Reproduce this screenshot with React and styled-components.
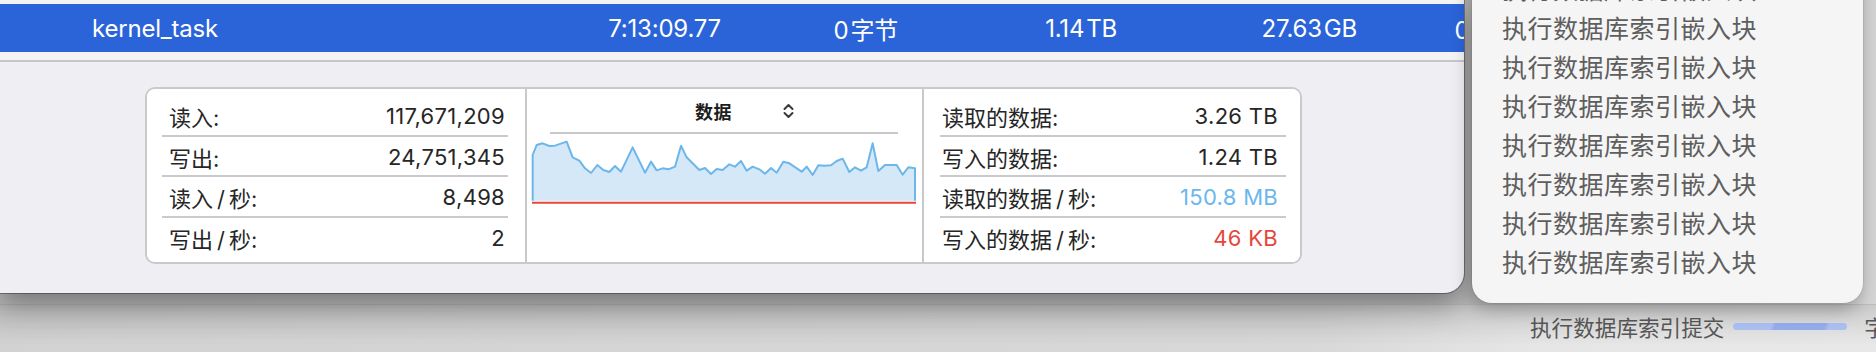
import React from "react";
import styled, { createGlobalStyle } from "styled-components";

const Global = createGlobalStyle`
  html, body { margin: 0; padding: 0; }
  body {
    width: 1876px;
    height: 352px;
    overflow: hidden;
    background: #d8d8d8;
    font-family: Inter, "Noto Sans CJK SC", sans-serif;
    -webkit-font-smoothing: antialiased;
  }
`;

const Desktop = styled.div`
  position: relative;
  width: 1876px;
  height: 352px;
  display: flex;
  flex-direction: column;
  background: linear-gradient(to right, #b8b8b8 0%, #bababa 75%, #d6d6d6 100%);
  overflow: hidden;
`;

const Window = styled.div`
  position: relative;
  z-index: 1;
  width: 1464px;
  height: 293px;
  flex: none;
  display: flex;
  flex-direction: column;
  background: #efeef3;
  border-bottom-right-radius: 20px;
  overflow: hidden;
  box-shadow: 0 0 0 1px rgba(0, 0, 0, 0.32), 0 10px 28px rgba(0, 0, 0, 0.38);
`;

const TableStrip = styled.div`
  height: ${(p) => p.$h}px;
  flex: none;
  background: #f4f4f5;
`;

const SelectedRow = styled.div`
  height: 48px;
  flex: none;
  background: #2b64d9;
  color: #ffffff;
  font-size: 24px;
  display: grid;
  grid-template-columns: 400px 229px 177px 219px 240px 162px;
  padding-left: 92px;
  align-items: center;
  white-space: nowrap;
`;

const Cell = styled.span`
  text-align: ${(p) => (p.$left ? "left" : "right")};
  letter-spacing: -0.2px;
`;

const SplitDivider = styled.div`
  height: 2px;
  flex: none;
  background: #c6c6c8;
`;

const DetailPanel = styled.div`
  flex: 1;
  padding: 25px 0 0 145px;
`;

const StatsBox = styled.div`
  width: 1157px;
  height: 177px;
  box-sizing: border-box;
  border: 2px solid #c9c9cb;
  border-radius: 10px;
  background: #ffffff;
  display: grid;
  grid-template-columns: 378px 395px 376px;
  column-gap: 2px;
  background-clip: padding-box;
  overflow: hidden;
`;

const StatsCell = styled.div`
  background: #ffffff;
  padding-top: 7px;
  box-shadow: ${(p) => (p.$divider ? "2px 0 0 #c9c9cb" : "none")};
  display: flex;
  flex-direction: column;
`;

const StatRow = styled.div`
  height: 38.5px;
  margin: ${(p) => p.$margin};
  padding: ${(p) => p.$padding};
  display: flex;
  align-items: center;
  justify-content: space-between;
  font-size: 22px;
  color: #262626;
  border-bottom: ${(p) => (p.$last ? "none" : "2px solid #cacacc")};
  white-space: nowrap;
`;

const StatLabel = styled.span`
  padding-top: 2px;
`;

const StatValue = styled.span`
  color: ${(p) => p.$color || "#262626"};
  letter-spacing: 0.3px;
  padding-top: 2px;
`;

const ChartCell = styled.div`
  background: #ffffff;
  display: flex;
  flex-direction: column;
  box-shadow: 2px 0 0 #c9c9cb;
`;

const ChartHeader = styled.div`
  height: 43px;
  display: flex;
  align-items: center;
  padding-left: 168px;
  gap: 51px;
`;

const ChartTitle = styled.span`
  font-size: 18px;
  font-weight: 700;
  color: #1e1e1e;
  letter-spacing: 0.5px;
`;

const ChartRule = styled.div`
  height: 2px;
  margin: 0 24px 0 23px;
  background: #c9c9cb;
`;

const ChartSvg = styled.svg`
  display: block;
  margin: 4px 0 0 4px;
`;

const Menu = styled.div`
  position: absolute;
  z-index: 2;
  top: -29px;
  right: 13px;
  width: 391px;
  padding: 0 0 20px 30px;
  box-sizing: border-box;
  background: #f5f5f5;
  border-radius: 0 0 20px 20px;
  box-shadow: 0 0 0 1px rgba(0, 0, 0, 0.06), -2px 6px 18px rgba(0, 0, 0, 0.3);
  display: flex;
  flex-direction: column;
`;

const MenuItem = styled.div`
  height: 39px;
  line-height: 39px;
  font-size: 25px;
  letter-spacing: 0.5px;
  color: #5e5e5e;
  white-space: nowrap;
`;

const BackBar = styled.div`
  margin-top: 11px;
  flex: 1;
  background:
    linear-gradient(rgba(0, 0, 0, 0.12), rgba(0, 0, 0, 0) 85%),
    linear-gradient(to right, #d2d2d2 0%, #d8d8d8 70%, #e6e6e6 82%, #e8e8e8 100%);
  border-top: 1px solid rgba(0, 0, 0, 0.18);
  display: flex;
  align-items: center;
  padding: 0 0 4px 1530px;
  gap: 9px;
  white-space: nowrap;
  font-size: 21.6px;
  color: #565656;
`;

const Progress = styled.div`
  width: 114px;
  height: 7px;
  flex: none;
  border-radius: 4px;
  margin-right: 8px;
  background: linear-gradient(
    110deg,
    #aabef0 0 34%,
    #93acea 37% 80%,
    #aabef0 83% 100%
  );
`;

const left = [
  ["读入:", "117,671,209"],
  ["写出:", "24,751,345"],
  ["读入\u2009/\u2009秒:", "8,498"],
  ["写出\u2009/\u2009秒:", "2"],
];

const right = [
  ["读取的数据:", "3.26 TB"],
  ["写入的数据:", "1.24 TB"],
  ["读取的数据\u2009/\u2009秒:", "150.8 MB", "#6bb7ec"],
  ["写入的数据\u2009/\u2009秒:", "46 KB", "#e6463c"],
];

const pts = [
  [1.67, 17], [5.67, 7], [11.67, 5.33], [18.33, 8], [24, 7.67], [35.67, 3.67],
  [41.67, 19.33], [48.33, 22.67], [54, 30.33], [60, 35], [66.33, 27], [72.33, 32],
  [78.33, 34], [84, 28], [90, 33.67], [101.67, 9.33], [114, 34.67], [120, 23.67],
  [125.67, 32.33], [131.67, 30.33], [137.33, 31.33], [144, 28.67], [150, 7.67],
  [155.67, 19.33], [168.33, 32], [174, 30], [180, 36], [185.67, 31], [191.67, 32],
  [198.33, 26.33], [204, 28.67], [210, 23], [215.67, 32.67], [221.67, 28.67],
  [228.33, 31.33], [234, 35.67], [240, 30], [245.67, 34.67], [252.33, 23.67],
  [258.33, 25.33], [270.67, 33.67], [275.67, 28.67], [281.67, 37], [287.33, 27.33],
  [293.33, 27.67], [300, 27.33], [305.67, 23], [311.67, 20.67], [318.33, 34],
  [324, 29.33], [330, 32.67], [335.67, 29.33], [341.67, 5.33], [347.33, 33],
  [354, 27], [365.67, 27], [371.67, 36.67], [377.33, 29.33], [384, 30.33],
];

const line = pts.map((p) => p.join(",")).join(" ");
const area = `1.67,62.67 ${line} 384,62.67`;

function Chevrons() {
  return (
    <svg width="11" height="16" viewBox="0 0 11 16">
      <path
        d="M1.5 6 L5.5 2 L9.5 6 M1.5 10 L5.5 14 L9.5 10"
        fill="none"
        stroke="#3a3a3a"
        strokeWidth="2"
        strokeLinecap="round"
        strokeLinejoin="round"
      />
    </svg>
  );
}

function StatColumn({ rows, margin, padding, divider }) {
  return (
    <StatsCell $divider={divider}>
      {rows.map(([l, v, c], i) => (
        <StatRow key={l} $margin={margin} $padding={padding} $last={i === rows.length - 1}>
          <StatLabel>{l}</StatLabel>
          <StatValue $color={c}>{v}</StatValue>
        </StatRow>
      ))}
    </StatsCell>
  );
}

export default function App() {
  return (
    <>
      <Global />
      <Desktop>
        <Window>
          <TableStrip $h={4} />
          <SelectedRow>
            <Cell $left>kernel_task</Cell>
            <Cell>7:13:09.77</Cell>
            <Cell>0{"\u200A"}字节</Cell>
            <Cell>1.14{"\u200A"}TB</Cell>
            <Cell>27.63{"\u200A"}GB</Cell>
            <Cell>0{"\u200A"}字节</Cell>
          </SelectedRow>
          <TableStrip $h={8} />
          <SplitDivider />
          <DetailPanel>
            <StatsBox>
              <StatColumn rows={left} margin="0 17px 0 15px" padding="0 3px 0 7px" divider />
              <ChartCell>
                <ChartHeader>
                  <ChartTitle>数据</ChartTitle>
                  <Chevrons />
                </ChartHeader>
                <ChartRule />
                <ChartSvg width="386" height="68" viewBox="0 0 386 68">
                  <polygon points={area} fill="#d5e8f8" />
                  <polyline
                    points={`1.67,62.67 ${line} 384,62.67`}
                    fill="none"
                    stroke="#6db6ea"
                    strokeWidth="2"
                    strokeLinejoin="round"
                  />
                  <line x1="1" y1="64.7" x2="385" y2="64.7" stroke="#e6463c" strokeWidth="2" />
                </ChartSvg>
              </ChartCell>
              <StatColumn rows={right} margin="0 14px 0 16px" padding="0 8px 0 2px" />
            </StatsBox>
          </DetailPanel>
        </Window>
        <BackBar>
          <span>执行数据库索引提交</span>
          <Progress />
          <span>字节</span>
        </BackBar>
        <Menu>
          {Array.from({ length: 8 }).map((_, i) => (
            <MenuItem key={i}>执行数据库索引嵌入块</MenuItem>
          ))}
        </Menu>
      </Desktop>
    </>
  );
}
